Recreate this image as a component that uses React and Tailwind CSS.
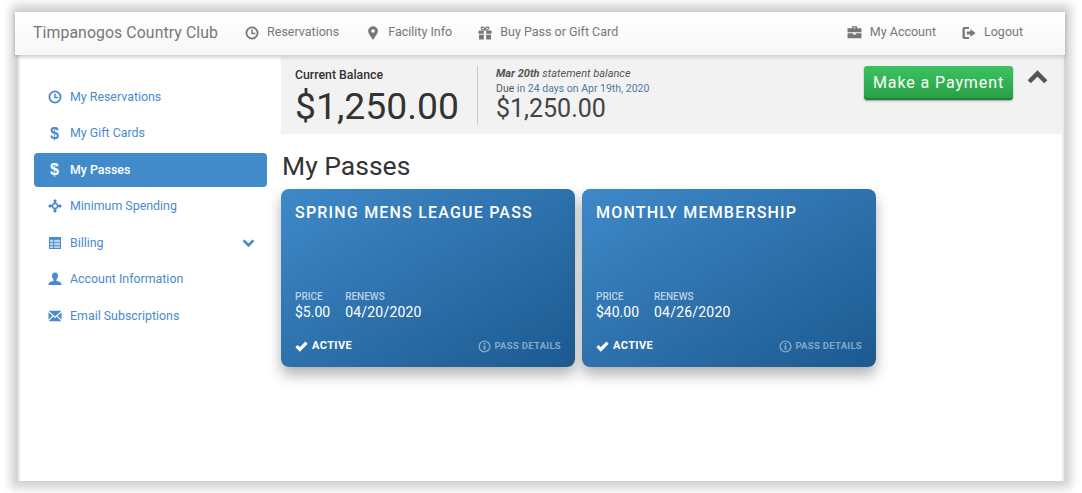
import React from 'react';

const Clock = ({ className }) => (
  <svg viewBox="0 0 14 14" className={className} fill="none" stroke="currentColor">
    <circle cx="7" cy="7" r="5.6" strokeWidth="1.8" />
    <path d="M7 3.400V7.400H10.400" strokeWidth="1.500" />
  </svg>
);

const Pin = ({ className }) => (
  <svg viewBox="0 0 14 14" className={className} fill="currentColor">
    <path fillRule="evenodd" d="M7 0.200a4.900 4.900 0 0 1 4.900 4.900C11.900 8 8.600 11 7 14 5.400 11 2.100 8 2.100 5.100A4.900 4.900 0 0 1 7 0.200Zm0 3a1.800 1.800 0 1 0 0 3.600 1.800 1.800 0 0 0 0-3.600Z" />
  </svg>
);

const Gift = ({ className }) => (
  <svg viewBox="0 0 14 14" className={className} fill="currentColor">
    <path d="M0.500 4.600h5.300v3.200H.5zM8.200 4.600h5.300v3.200H8.200zM1 8.800h4.800v4.700H1zM8.200 8.800H13v4.700H8.200z" />
    <path d="M7 4C5 4 3 3.400 3.200 1.900 3.400.5 6 .7 7 3.300 8 .7 10.600.5 10.800 1.900 11 3.400 9 4 7 4Z" fill="none" stroke="currentColor" strokeWidth="1.200" />
  </svg>
);

const Briefcase = ({ className }) => (
  <svg viewBox="0 0 14 14" className={className} fill="currentColor">
    <path fillRule="evenodd" d="M4.600 3V1.200h4.800V3H13.500v3.800H.5V3Zm1.200 0h2.400V2.300H5.800Z" />
    <path d="M.5 7.800h5v1h3v-1h5v4.600H.5z" />
  </svg>
);

const LogOut = ({ className }) => (
  <svg viewBox="0 0 14 14" className={className} fill="currentColor">
    <path d="M.5 3a2 2 0 0 1 2-2H7v2H2.800v8H7v2H2.500a2 2 0 0 1-2-2Z" />
    <path d="M8.400 3 13.500 7 8.400 11V8.500H4.800V5.500h3.600Z" />
  </svg>
);

const Move = ({ className }) => (
  <svg viewBox="0 0 14 14" className={className} fill="currentColor">
    <path fillRule="evenodd" d="M7 0 9.400 2.600H8.100v1.100A3.400 3.400 0 0 1 10.300 5.900h1.100V4.600L14 7l-2.600 2.400V8.100h-1.100a3.400 3.400 0 0 1-2.200 2.200v1.100h1.300L7 14l-2.400-2.600h1.300v-1.100a3.400 3.400 0 0 1-2.200-2.200H2.600v1.300L0 7l2.600-2.400v1.300h1.100a3.400 3.400 0 0 1 2.200-2.200V2.600H4.600ZM7 5.200a1.800 1.800 0 1 0 0 3.600 1.800 1.800 0 0 0 0-3.600Z" />
  </svg>
);

const Table = ({ className }) => (
  <svg viewBox="0 0 14 14" className={className}>
    <rect x="1" y="1" width="12" height="12" fill="currentColor" />
    <path d="M2 3.800h3.200v2.400H2zM6.200 3.800H12v2.400H6.200zM2 7.100h3.200v2.200H2zM6.200 7.100H12v2.200H6.200zM2 10.200h3.200V12H2zM6.200 10.200H12V12H6.200z" fill="#bcd5ec" />
  </svg>
);

const User = ({ className }) => (
  <svg viewBox="0 0 14 14" className={className} fill="currentColor">
    <path d="M7 .6c1.900 0 3 1.400 3 3.200 0 1.600-.8 3.200-1.600 3.900v1c1.800.6 4.600 1.300 5.100 3v1.300H.5V11.700c.5-1.700 3.300-2.400 5.100-3v-1C4.800 7 4 5.400 4 3.800 4 2 5.100.6 7 .6Z" />
  </svg>
);

const Mail = ({ className }) => (
  <svg viewBox="0 0 14 14" className={className} fill="currentColor">
    <path d="M.5 1.800h13L7 7.400Z" />
    <path d="M.5 3.200v7.600L4.400 6.700ZM13.500 3.200v7.600L9.600 6.700Z" />
    <path d="M5.200 7.400 7 8.900l1.800-1.500 4.500 4.800H.7Z" />
  </svg>
);

const Chevron = ({ className, up }) => (
  <svg viewBox="0 0 14 10" className={className} fill="none" stroke="currentColor" strokeWidth="3">
    <path d={up ? 'M1.500 8.500 7 3l5.500 5.500' : 'M1.500 1.500 7 7l5.500-5.500'} />
  </svg>
);

const Check = ({ className }) => (
  <svg viewBox="0 0 14 12" className={className} fill="none" stroke="currentColor" strokeWidth="3.400">
    <path d="M1.500 5.500 5.200 9.200 12.500 1.800" />
  </svg>
);

const Info = ({ className }) => (
  <svg viewBox="0 0 14 14" className={className} fill="none" stroke="currentColor">
    <circle cx="7" cy="7" r="5.800" strokeWidth="1.500" />
    <path d="M7 6v4.400" strokeWidth="2.200" />
    <path d="M7 3.200v1.600" strokeWidth="2.200" />
  </svg>
);

const Dollar = ({ className }) => (
  <span className={className}>$</span>
);

const topLinks = [
  { icon: Clock, label: 'Reservations', cls: 'ml-[27px]' },
  { icon: Pin, label: 'Facility Info', cls: 'ml-[27px]' },
  { icon: Gift, label: 'Buy Pass or Gift Card', cls: 'ml-[26px]' },
];

const sideLinks = [
  { icon: Clock, label: 'My Reservations' },
  { icon: Dollar, label: 'My Gift Cards', dollar: true },
  { icon: Dollar, label: 'My Passes', dollar: true, active: true },
  { icon: Move, label: 'Minimum Spending' },
  { icon: Table, label: 'Billing', chevron: true },
  { icon: User, label: 'Account Information' },
  { icon: Mail, label: 'Email Subscriptions' },
];

const passes = [
  { name: 'SPRING MENS LEAGUE PASS', price: '$5.00', renews: '04/20/2020' },
  { name: 'MONTHLY MEMBERSHIP', price: '$40.00', renews: '04/26/2020' },
];

const PassCard = ({ pass }) => (
  <div className="w-[294px] h-[178px] rounded-lg bg-gradient-to-br from-[#3f89c9] to-[#1c5a90] shadow-[0_8px_14px_rgba(0,0,0,0.3)] px-[14px] pt-[14px] pb-[14px] flex flex-col text-white">
    <div className="text-[16px] leading-[20px] font-medium tracking-[1.2px]">{pass.name}</div>
    <div className="mt-auto flex gap-[15px]">
      <div>
        <div className="text-[10px] leading-[12px] font-medium text-[#b9d2e8]">PRICE</div>
        <div className="text-[14px] leading-[20px] mt-[-1px]">{pass.price}</div>
      </div>
      <div>
        <div className="text-[10px] leading-[12px] font-medium text-[#b9d2e8]">RENEWS</div>
        <div className="text-[14px] leading-[20px] mt-[-1px] tracking-[0.2px]">{pass.renews}</div>
      </div>
    </div>
    <div className="mt-[17px] flex items-center justify-between">
      <div className="flex items-center gap-[4px] text-[11px] leading-[14px] font-bold tracking-[0.4px]">
        <Check className="w-[13px] h-[11px]" />
        ACTIVE
      </div>
      <div className="flex items-center gap-[3px] text-[9.500px] leading-[14px] font-bold tracking-[0.3px] text-[#7fa9cf]">
        <Info className="w-[13px] h-[13px]" />
        PASS DETAILS
      </div>
    </div>
  </div>
);

const App = () => {
  return (
    <div className="w-[1082px] h-[493px] bg-white pt-3 pl-[18px] overflow-hidden font-['Roboto',sans-serif]">
      <div className="w-[1046px] h-[469px] bg-white border-x-2 border-[#ececec] shadow-[0_0_9px_7px_#d0d0d0] flex flex-col">
        {/* Top nav */}
        <div className="relative z-10 -ml-[5px] -mr-[3px] h-[43px] shrink-0 flex items-center pb-[2px] pl-[18px] pr-[42px] bg-gradient-to-b from-white to-[#f7f7f7] shadow-[0_2px_4px_rgba(0,0,0,0.22)] text-[#777777] text-[12.500px]">
          <div className="text-[15.800px] tracking-[0.1px]">Timpanogos Country Club</div>
          {topLinks.map(link => (
            <div key={link.label} className={`flex items-center gap-[8px] ${link.cls}`}>
              <link.icon className="w-[14px] h-[14px]" />
              {link.label}
            </div>
          ))}
          <div className="ml-auto flex items-center gap-[8px]">
            <Briefcase className="w-[15px] h-[15px]" />
            My Account
          </div>
          <div className="ml-[26px] flex items-center gap-[8px]">
            <LogOut className="w-[14px] h-[14px]" />
            Logout
          </div>
        </div>

        <div className="flex flex-1 min-h-0">
          {/* Sidebar */}
          <div className="w-[261px] shrink-0 pl-[14px] pr-[14px] pt-[25px] flex flex-col gap-[2.500px] text-[12.400px]">
            {sideLinks.map(item => (
              <div
                key={item.label}
                className={`h-[34px] shrink-0 flex items-center rounded-sm pl-[14px] pr-[12px] ${item.active ? 'bg-[#428bca] text-white font-medium' : 'text-[#4a8bcb]'}`}
              >
                <div className="w-[22px] shrink-0 flex">
                  {item.dollar ? (
                    <item.icon className="w-[13px] text-center text-[16px] font-bold leading-none font-['Liberation_Sans',sans-serif]" />
                  ) : (
                    <item.icon className="w-[14px] h-[14px] -mt-[1px]" />
                  )}
                </div>
                {item.label}
                {item.chevron && <Chevron className="ml-auto w-[13px] h-[9px]" />}
              </div>
            ))}
          </div>

          {/* Main */}
          <div className="flex-1 min-w-0">
            <div className="h-[77px] mt-[2px] bg-[#f2f2f2] flex pl-[14px] pt-[9px] relative">
              <div className="w-[182px]">
                <div className="text-[12.300px] leading-[16px] mt-[1px] font-medium text-[#333333]">Current Balance</div>
                <div className="text-[37.300px] leading-[44px] mt-[1px] text-[#333333]">$1,250.00</div>
              </div>
              <div className="w-px h-[59px] bg-[#cccccc]"></div>
              <div className="ml-[18px]">
                <div className="text-[11px] leading-[15px] italic text-[#555555]">
                  <span className="font-bold">Mar 20th</span> statement balance
                </div>
                <div className="text-[10.500px] leading-[15px] text-[#555555]">
                  Due <span className="text-[#4f7aa3]">in 24 days on Apr 19th, 2020</span>
                </div>
                <div className="text-[25px] leading-[28px] text-[#444444] mt-[-1px]">$1,250.00</div>
              </div>
              <button className="ml-auto mr-[14px] h-[34px] w-[149px] pt-[1px] rounded-[3px] bg-gradient-to-b from-[#3dc262] to-[#28a145] border-b-2 border-[#1f8238] text-white text-[16px] tracking-[0.9px] shadow-[0_1px_2px_rgba(0,0,0,0.35)]">
                Make a Payment
              </button>
              <Chevron up className="w-[21px] h-[15px] mt-[3px] mr-[14px] text-[#555555]" />
            </div>
            <h1 className="text-[26.500px] leading-[32px] mt-[16px] ml-[1px] text-[#333333]">My Passes</h1>
            <div className="flex gap-[7px] mt-[7px]">
              {passes.map(pass => (
                <PassCard key={pass.name} pass={pass} />
              ))}
            </div>
          </div>
        </div>
      </div>
    </div>
  );
};

export default App;
